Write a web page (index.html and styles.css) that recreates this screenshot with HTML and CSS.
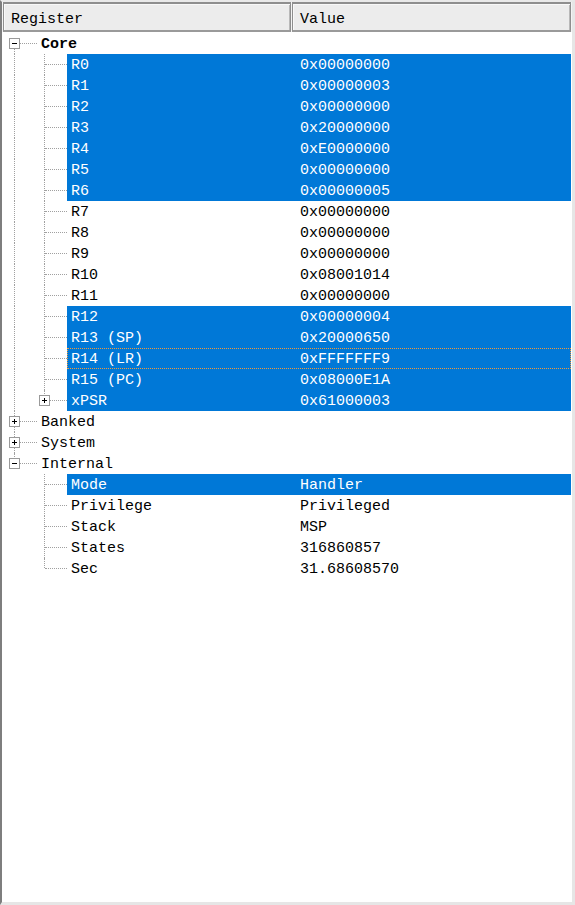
FILE: index.html
```html
<!DOCTYPE html>
<html>
<head>
<meta charset="utf-8">
<link rel="stylesheet" href="styles.css">
</head>
<body>
<div class="frame">
  <div class="header">
    <div class="hcell hreg">Register</div>
    <div class="hcell hval">Value</div>
  </div>
  <div class="tree">
    <div class="row"><span class="g first"><span class="box minus"></span></span><div class="item"><span class="nm bold">Core</span><span class="val"></span></div></div>
    <div class="row"><span class="g pipe"></span><span class="g tee"></span><div class="item sel"><span class="nm">R0</span><span class="val">0x00000000</span></div></div>
    <div class="row"><span class="g pipe"></span><span class="g tee"></span><div class="item sel"><span class="nm">R1</span><span class="val">0x00000003</span></div></div>
    <div class="row"><span class="g pipe"></span><span class="g tee"></span><div class="item sel"><span class="nm">R2</span><span class="val">0x00000000</span></div></div>
    <div class="row"><span class="g pipe"></span><span class="g tee"></span><div class="item sel"><span class="nm">R3</span><span class="val">0x20000000</span></div></div>
    <div class="row"><span class="g pipe"></span><span class="g tee"></span><div class="item sel"><span class="nm">R4</span><span class="val">0xE0000000</span></div></div>
    <div class="row"><span class="g pipe"></span><span class="g tee"></span><div class="item sel"><span class="nm">R5</span><span class="val">0x00000000</span></div></div>
    <div class="row"><span class="g pipe"></span><span class="g tee"></span><div class="item sel"><span class="nm">R6</span><span class="val">0x00000005</span></div></div>
    <div class="row"><span class="g pipe"></span><span class="g tee"></span><div class="item"><span class="nm">R7</span><span class="val">0x00000000</span></div></div>
    <div class="row"><span class="g pipe"></span><span class="g tee"></span><div class="item"><span class="nm">R8</span><span class="val">0x00000000</span></div></div>
    <div class="row"><span class="g pipe"></span><span class="g tee"></span><div class="item"><span class="nm">R9</span><span class="val">0x00000000</span></div></div>
    <div class="row"><span class="g pipe"></span><span class="g tee"></span><div class="item"><span class="nm">R10</span><span class="val">0x08001014</span></div></div>
    <div class="row"><span class="g pipe"></span><span class="g tee"></span><div class="item"><span class="nm">R11</span><span class="val">0x00000000</span></div></div>
    <div class="row"><span class="g pipe"></span><span class="g tee"></span><div class="item sel"><span class="nm">R12</span><span class="val">0x00000004</span></div></div>
    <div class="row"><span class="g pipe"></span><span class="g tee"></span><div class="item sel"><span class="nm">R13 (SP)</span><span class="val">0x20000650</span></div></div>
    <div class="row"><span class="g pipe"></span><span class="g tee"></span><div class="item sel focus"><span class="nm">R14 (LR)</span><span class="val">0xFFFFFFF9</span></div></div>
    <div class="row"><span class="g pipe"></span><span class="g tee"></span><div class="item sel"><span class="nm">R15 (PC)</span><span class="val">0x08000E1A</span></div></div>
    <div class="row"><span class="g pipe"></span><span class="g ell"><span class="box plus"></span></span><div class="item sel"><span class="nm">xPSR</span><span class="val">0x61000003</span></div></div>
    <div class="row"><span class="g tee"><span class="box plus"></span></span><div class="item"><span class="nm">Banked</span><span class="val"></span></div></div>
    <div class="row"><span class="g tee"><span class="box plus"></span></span><div class="item"><span class="nm">System</span><span class="val"></span></div></div>
    <div class="row"><span class="g ell"><span class="box minus"></span></span><div class="item"><span class="nm">Internal</span><span class="val"></span></div></div>
    <div class="row"><span class="g"></span><span class="g tee"></span><div class="item sel"><span class="nm">Mode</span><span class="val">Handler</span></div></div>
    <div class="row"><span class="g"></span><span class="g tee"></span><div class="item"><span class="nm">Privilege</span><span class="val">Privileged</span></div></div>
    <div class="row"><span class="g"></span><span class="g tee"></span><div class="item"><span class="nm">Stack</span><span class="val">MSP</span></div></div>
    <div class="row"><span class="g"></span><span class="g tee"></span><div class="item"><span class="nm">States</span><span class="val">316860857</span></div></div>
    <div class="row"><span class="g"></span><span class="g ell"></span><div class="item"><span class="nm">Sec</span><span class="val">31.68608570</span></div></div>
  </div>
</div>
</body>
</html>
```
FILE: styles.css
```css
html, body {
  margin: 0;
  padding: 0;
  background: #ffffff;
}

.frame {
  width: 575px;
  height: 905px;
  box-sizing: border-box;
  background: #ffffff;
  border-left: 2px solid #7e7e7e;
  border-top: 2px solid #e9e9e9;
  border-right: 3px solid #e6e6e6;
  border-bottom: 3px solid #e6e6e6;
  font-family: "Liberation Mono", "DejaVu Sans Mono", monospace;
  font-size: 15px;
  color: #000000;
  overflow: hidden;
}

.header {
  display: flex;
  height: 30px;
  gap: 1px;
  padding-left: 1px;
  padding-right: 1px;
  background: #f4f4f4;
}

.hcell {
  box-sizing: border-box;
  height: 30px;
  line-height: 29px;
  padding-left: 7px;
  padding-top: 1px;
  background: #ececec;
  border: 1px solid #8e8e8e;
  border-top: 2px solid #8e8e8e;
  border-bottom: 2px solid #9a9a9a;
  box-shadow: inset 1px 1px 0 #f8f8f8, inset -1px 0 0 #b8b8b8;
}

.hreg {
  width: 288px;
}

.hval {
  flex: 1;
}

.tree {
  padding-top: 1px;
}

.row {
  display: flex;
  height: 21px;
}

.g {
  flex: none;
  width: 30px;
  position: relative;
}

.g::before,
.g::after {
  content: none;
  position: absolute;
}

.pipe::before,
.tee::before,
.ell::before,
.first::before {
  content: "";
  left: 12px;
  width: 0;
  border-left: 1px dotted #a0a0a0;
}

.pipe::before,
.tee::before {
  top: 0;
  bottom: 0;
}

.ell::before {
  top: 0;
  height: 10px;
}

.first::before {
  top: 10px;
  bottom: 0;
}

.tee::after,
.ell::after,
.first::after {
  content: "";
  left: 13px;
  right: -5px;
  top: 10px;
  height: 0;
  border-top: 1px dotted #a0a0a0;
}

.box {
  position: absolute;
  left: 7px;
  top: 5px;
  width: 11px;
  height: 11px;
  box-sizing: border-box;
  border: 1px solid #9a9a9a;
  background: #ffffff;
  z-index: 1;
}

.box::before {
  content: "";
  position: absolute;
  left: 2px;
  top: 4px;
  width: 5px;
  height: 1px;
  background: #000000;
}

.plus::after {
  content: "";
  position: absolute;
  left: 4px;
  top: 2px;
  width: 1px;
  height: 5px;
  background: #000000;
}

.item {
  flex: 1;
  display: flex;
  box-sizing: border-box;
  height: 21px;
  line-height: 21px;
  padding-top: 1px;
  margin-left: 5px;
  margin-right: 1px;
  padding-left: 4px;
  white-space: pre;
}

.nm {
  flex: 1;
}

.val {
  width: 271px;
  flex: none;
}

.bold {
  font-weight: bold;
}

.sel {
  background: #0078d7;
  color: #ffffff;
}

.focus {
  outline: 1px dotted #f29a3a;
  outline-offset: -1px;
}
```
